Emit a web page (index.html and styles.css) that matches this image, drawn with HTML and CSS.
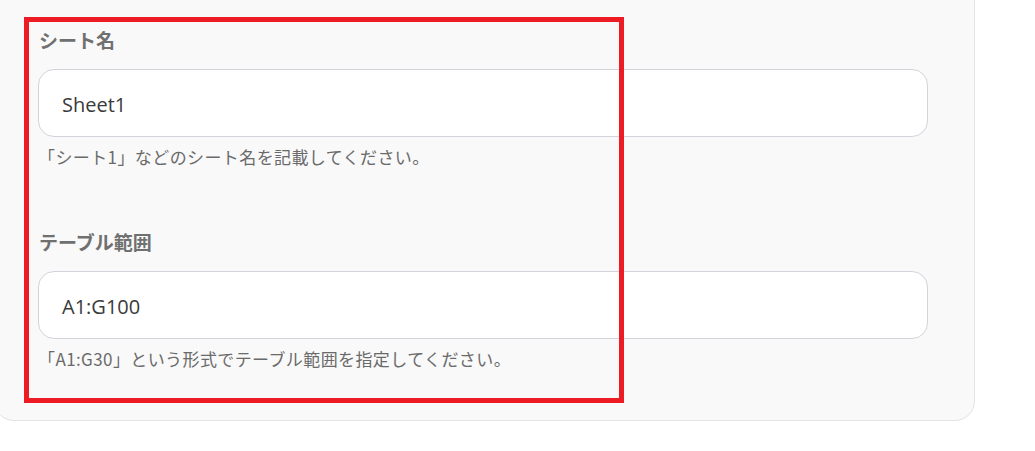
FILE: index.html
```html
<!DOCTYPE html>
<html lang="ja">
<head>
<meta charset="utf-8">
<link rel="stylesheet" href="styles.css">
</head>
<body>
<div class="panel">
  <div class="form">
    <div class="field">
      <label class="label">シート名</label>
      <div class="input">Sheet1</div>
      <p class="help">「シート1」などのシート名を記載してください。</p>
    </div>
    <div class="field second">
      <label class="label">テーブル範囲</label>
      <div class="input">A1:G100</div>
      <p class="help">「A1:G30」という形式でテーブル範囲を指定してください。</p>
    </div>
    <div class="highlight"></div>
  </div>
</div>
</body>
</html>
```
FILE: styles.css
```css
html, body {
  margin: 0;
  padding: 0;
  background: #ffffff;
}
body {
  font-family: "Open Sans", "Noto Sans CJK JP", sans-serif;
  width: 1035px;
  height: 451px;
  overflow: hidden;
}
.panel {
  margin-left: -6px;
  margin-top: -30px;
  width: 981px;
  height: 451px;
  box-sizing: border-box;
  background: #f9f9f9;
  border: 1px solid #e2e3e6;
  border-radius: 20px;
}
.form {
  position: relative;
  padding-top: 56px;
  padding-left: 43px;
  width: 890px;
}
.field {
  display: flex;
  flex-direction: column;
}
.second {
  margin-top: 60px;
}
.label {
  font-family: "Noto Sans CJK JP", sans-serif;
  font-weight: 700;
  font-size: 19px;
  line-height: 26px;
  color: #707070;
  padding-left: 1px;
}
.input {
  margin-top: 16px;
  border: 1px solid #d2d4dc;
  border-radius: 16px;
  background: #ffffff;
  display: flex;
  align-items: center;
  padding-left: 23px;
  padding-top: 2px;
  box-sizing: content-box;
  font-size: 20px;
  color: #3a3a3a;
  height: 64px;
}
.help {
  margin: 8px 0 0 0;
  font-family: "Noto Sans CJK JP", sans-serif;
  font-size: 17px;
  line-height: 24px;
  color: #6a6a6a;
  letter-spacing: 0.4px;
}
.highlight {
  position: absolute;
  left: 29px;
  top: 46px;
  width: 590px;
  height: 376px;
  border: 5px solid #ed1c24;
}
```
